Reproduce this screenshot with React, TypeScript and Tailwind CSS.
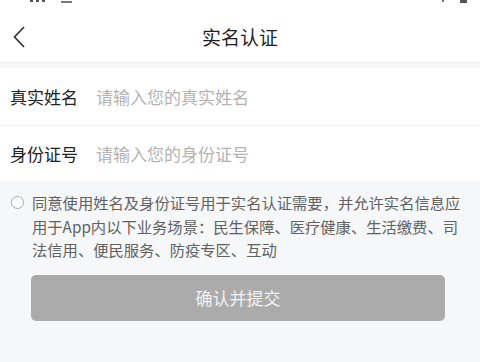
import React from 'react';

const font = { fontFamily: '"Noto Sans CJK SC", "Noto Sans", sans-serif' };

export default function App() {
  return (
    <div className="w-[480px] h-[362px] bg-[#f6f7f9] overflow-hidden" style={font}>
      {/* status bar, cut off at the top */}
      <div className="bg-white h-[62px] flex flex-col">
        <div className="relative h-[6px]">
          <span className="absolute left-[30px] top-0 w-[3px] h-[2px] bg-[#555]" />
          <span className="absolute left-[36px] top-0 w-[3px] h-[2px] bg-[#555]" />
          <span className="absolute left-[42px] top-0 w-[3px] h-[2px] bg-[#555]" />
          <span className="absolute left-[61px] top-[1px] w-[11px] h-[2px] bg-[#777]" />
          <span className="absolute left-[442px] top-0 w-[2px] h-[2px] bg-[#777]" />
          <span className="absolute left-[460px] top-0 w-[7px] h-[3px] bg-[#555]" />
        </div>
        <div className="relative flex-1 flex items-center justify-center">
          <svg
            className="absolute left-[12px] top-[20px]"
            width="14"
            height="22"
            viewBox="0 0 14 22"
            fill="none"
            stroke="#2b2b2b"
            strokeWidth="1.6"
          >
            <path d="M12 1 L2.5 11 L12 21" />
          </svg>
          <span className="text-[19px] text-[#1f1f1f] translate-y-[3px]">实名认证</span>
        </div>
      </div>

      <div className="h-[6px] border-t border-[#ececec]" />

      {/* form rows */}
      <div className="bg-white">
        <div className="h-[58px] flex items-center px-[10px] border-b border-[#f2f2f2]">
          <span className="w-[86px] text-[17px] text-[#222]">真实姓名</span>
          <span className="text-[17px] text-[#b3b3b3]">请输入您的真实姓名</span>
        </div>
        <div className="h-[55px] flex items-center px-[10px]">
          <span className="w-[86px] text-[17px] text-[#222]">身份证号</span>
          <span className="text-[17px] text-[#b3b3b3]">请输入您的身份证号</span>
        </div>
      </div>

      {/* agreement */}
      <div className="flex gap-[8px] pl-[11px] pr-[18px] pt-[10px]">
        <span className="mt-[5px] w-[13px] h-[13px] shrink-0 rounded-full border border-[#aaa] bg-white" />
        <p className="text-[15.3px] leading-[23.5px] text-[#616161]">
          同意使用姓名及身份证号用于实名认证需要，并允许实名信息应用于App内以下业务场景：民生保障、医疗健康、生活缴费、司法信用、便民服务、防疫专区、互动
        </p>
      </div>

      <div className="px-[31px] mt-[13px]">
        <button className="w-[414px] h-[46px] rounded-[5px] bg-[#ababab] text-[17px] text-[#f2f2f2]">
          确认并提交
        </button>
      </div>
    </div>
  );
}
